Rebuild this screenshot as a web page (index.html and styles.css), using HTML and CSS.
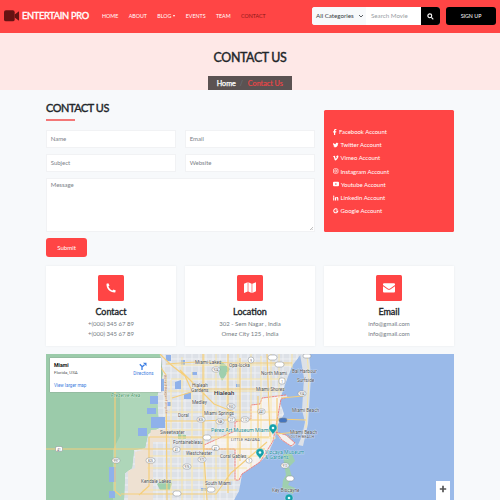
FILE: index.html
```
<!DOCTYPE html>
<html lang="en">
<head>
<meta charset="utf-8">
<title>Contact Us - Entertain Pro</title>
<link rel="stylesheet" href="styles.css">
</head>
<body>
<header class="navbar">
  <a class="brand"><svg class="camera" viewBox="0 0 16 12"><rect width="11" height="11.5" rx="2"/><path d="M11 4.5 15.5 1v10L11 7.5z"/></svg><span>ENTERTAIN PRO</span></a>
  <nav class="menu"><a>HOME</a><a>ABOUT</a><a>BLOG<i class="caret"></i></a><a>EVENTS</a><a>TEAM</a><a class="active">CONTACT</a></nav>
  <div class="search">
    <div class="category">All Categories<svg viewBox="0 0 6 6"><path d="m1 2 2 2 2-2"/></svg></div>
    <div class="query">Search Movie</div>
    <div class="go"><svg viewBox="0 0 8 8"><circle cx="3.2" cy="3.2" r="2.2"/><path d="m5 5 2.2 2.2"/></svg></div>
  </div>
  <a class="signup">SIGN UP</a>
</header>
<section class="hero">
  <h1>CONTACT US</h1>
  <div class="crumbs"><span class="home">Home</span><span class="slash">/</span><span class="here">Contact Us</span></div>
</section>
<main class="container">
  <div class="top">
    <section class="form">
      <h2>CONTACT US</h2>
      <div class="rule"></div>
      <div class="fields">
        <div class="field">Name</div><div class="field">Email</div>
        <div class="field">Subject</div><div class="field">Website</div>
        <div class="field message">Message<svg class="grip" viewBox="0 0 4 4"><path d="M0 4 4 0M2.2 4 4 2.2"/></svg></div>
      </div>
      <a class="submit">Submit</a>
    </section>
    <ul class="social">
      <li><svg style="width:4px" viewBox="0 0 4 6"><path d="M1 6V3.4H.1V2.3H1V1.5C1 .5 1.6 0 2.5 0h.9v1h-.6c-.5 0-.6.2-.6.6v.7h1.1l-.2 1.1h-.9V6z"/></svg>Facebook Account</li>
      <li><svg viewBox="0 0 6 6"><path d="M6 1.2l-.6.6C5.4 4.1 3.8 5.5 1.9 5.5.9 5.5.3 5.2 0 5c.7 0 1.3-.1 1.7-.5C1 4.4.7 4 .6 3.600h.5C.4 3.300.1 2.800.1 2.300l.5.2C0 2 0 1.300.3.8c.7.8 1.500 1.200 2.600 1.300C2.800 1.200 3.400.6 4.200.6c.4 0 .6.1.9.4l.7-.3-.4.6z"/></svg>Twitter Account</li>
      <li><svg viewBox="0 0 6 6"><path d="M0 1.500C.6 1 1.100.5 1.500.5c.9 0 .9 1.600 1.200 2.600.3.900.5.800 1 0 .6-.9.300-1.400-.4-1.100C3.600.9 4.300.3 5.100.3 6.400.3 6 2 5.300 3.100 4.500 4.500 3.400 5.700 2.600 5.700c-.9 0-1.100-1.800-1.500-3.200C.9 1.700.7 2 .3 2.200z"/></svg>Vimeo Account</li>
      <li><svg class="line" viewBox="0 0 6 6"><rect x=".5" y=".5" width="5" height="5" rx="1.300"/><circle cx="3" cy="3" r="1.200"/><path d="M4.400 1.400h.3"/></svg>Instagram Account</li>
      <li><svg style="width:6px" viewBox="0 0 6 6"><path fill-rule="evenodd" d="M1 .8h4q1 0 1 1v2.400q0 1-1 1H1q-1 0-1-1V1.800q0-1 1-1zM2.400 2v2L4 3z"/></svg>Youtube Account</li>
      <li><svg viewBox="0 0 6 6"><path d="M.2 2.100h1.200v3.600H.2zM.8.400a.7.700 0 1 1 0 1.400.7.700 0 0 1 0-1.400zM2.200 2.100h1.100v.5C4 1.600 5.800 1.800 5.800 3.500v2.200H4.600v-2c0-1.100-1.200-1-1.200 0v2H2.200z"/></svg>Linkedin Account</li>
      <li><svg class="line g" viewBox="0 0 6 6"><path d="M4.800 1.500A2.200 2.200 0 1 0 5.200 3.100H3.100"/></svg>Google Account</li>
    </ul>
  </div>
  <div class="cards">
    <article class="card"><div class="tile"><svg viewBox="0 0 10 10"><path d="M2.300.2.500.8C.2 5.800 4.200 9.800 9.200 9.500l.6-1.900-2.300-1.100-1 1.100C4.600 6.800 3.200 5.400 2.400 3.500l1.100-1z"/></svg></div><h3>Contact</h3><p>+(000) 345 67 89<br>+(000) 345 67 89</p></article>
    <article class="card"><div class="tile"><svg style="width:12px" viewBox="0 0 13 12"><path d="M0 2 4 .3v9.900L0 11.900zM4.700.3l3.600 1.600v9.900l-3.600-1.600zM9 1.900 13 .2v9.900l-4 1.700z"/></svg></div><h3>Location</h3><p>302 - Sem Nagar , India<br>Omez City 125 , India</p></article>
    <article class="card"><div class="tile"><svg style="width:12px" viewBox="0 0 12 10"><path d="M1 .3h10q1 0 1 1v.8L7.200 5.500q-1.200.9-2.400 0L0 2.100v-.8q0-1 1-1zM0 3.200l4.400 3.100q1.600 1 3.200 0L12 3.200v5.300q0 1-1 1H1q-1 0-1-1z"/></svg></div><h3>Email</h3><p>info@gmail.com<br>info@gmail.com</p></article>
  </div>
  <section class="map">
    <svg class="chart" viewBox="46 354 408 146">
      <defs><pattern id="grid" width="7" height="7" patternUnits="userSpaceOnUse"><path class="street" d="M0 2H7M3 0V7"/></pattern></defs>
      <rect class="sea" x="46" y="354" width="408" height="146"/>
      <path class="land" d="M46 354H301L292 366 286 382 281 396 280 402 284 414 276 428 275 438 268 454 260 462 242 474 239 491 234 500H46z"/>
      <path fill="url(#grid)" d="M155 354H301L292 366 286 382 281 396 280 402 284 414 276 428 275 438 268 454 260 462 242 474 239 491 234 500H120V455L150 430z"/>
      <path class="park" d="M46 354H160L163 374 157 397 159 428 148 434 145 448 134 450 132 468 125 473 124 500H46z"/>
      <path class="lightpark" d="M114 385 125 376 161 375 157 397 159 428 148 434 145 448 134 450 132 468 125 473 124 500H113V450L119 437z"/>
      <path class="marsh" d="M46 354h74v82l-7 13v51H46z"/>
      <path class="sand" d="M151 430l18-1v13h-16v58h-25v-29l7-3v-16l12-3z"/>
      <path class="land" d="M300 354h9l2 22-3 48-5 22-5-1 4-9 3-14-3-12 2-32zM276 432l11 4 9 8-4 3-12-8z"/>
      <path class="park" d="M283 454l9 0 3 7-6 6 3 10-4 8 7 3-2 6-11-4 1-10 3-5-2-12zM220 360l10 9-8 12-3-7zM178 434l8 1v4h-8zM157 484l7-5 8 4-2 7h-10z"/>
      <path class="lake" d="M166 355h5v6h-5zM175 382l6-2v9h-6zM157 378l7 1v12h-7zM150 396h8v8h-8zM147 408h9v6h-9zM151 417h14v11h-14zM138 428h9v8h-9zM109 467h7v15h-7zM109 491h6v7h-6zM184 394l7-2v7h-7zM181 360h4v5h-4zM192 372h5v3h-5zM236 384h4v3h-4zM166 402h5v4h-5zM201 488h8v3h-8z"/>
      <path class="city" d="M286 395l-24 3-2 6-9 1v14l-16 3v9l-31 14v4h31v31h4l3-6 18-12 13-21 5-26 3-16 7-2M276 432l10 3 9 8-4 3-9-6z"/>
      <path class="minor" d="M171 365h121M171 379h115M168 391h114M165 412h113M172 430h100M174 438h102M150 456h116M147 468h100M147 480h89M142 490h95M171 380v120M182 357v143M192 372v128M204 354v146M216 354v146M227 372v110M238 354v126M251 354v113M261 356v103M271 354v89M279 354v44M292 354v14M307 354l2 24-3 50"/>
      <path class="road" d="M46 449h219M115 384v107l6 5M160 354l10 10 15 12 7 15M154 358l12 17 1 125M166 364l30-2 42 1h54M172 398l29-9h84M165 421h37l23-1h55M149 451v-14h120M121 494h95l15-21 36-31M149 450v36l-10 9M203 354v88l4 58M228 354v139M240 358v103M258 396v52M267 354l3 83M277 398v34M281 398l22-2M278 419l28 1M276 434l22-2M180 370l34 34 20 8"/>
      <g class="labels">
        <text x="111" y="397" class="green">Preserve Area</text>
        <text x="195" y="364">Miami Lakes</text><text x="229" y="367">Opa-locka</text><text x="261" y="374.500">North Miami</text><text x="292" y="373">Bal Harbour</text><text x="297" y="381.500">Surfside</text>
        <text x="192" y="387">Hialeah</text><text x="191" y="391.500">Gardens</text><text x="214" y="394.500" class="big">Hialeah</text><text x="256" y="390.500">Miami Shores</text><text x="192" y="404">Medley</text><text x="204" y="415">Miami Springs</text><text x="292" y="411.500">Miami Beach</text><text x="290" y="433.500">Miami Beach</text><text x="288" y="438" class="area">SOUTH BEACH</text>
        <text x="160" y="434">Sweetwater</text><text x="173" y="444">Fontainebleau</text><text x="186" y="455">Westchester</text><text x="220" y="458">Coral Gables</text><text x="231" y="441" class="area">LITTLE HAVANA</text><text x="141" y="482.500">Kendale Lakes</text><text x="205" y="484.500">South Miami</text><text x="272" y="491.500">Key Biscayne</text><text x="178" y="416.500">Doral</text>
        <text x="211" y="432" class="poi">Pérez Art Museum Miami</text><text x="265" y="454" class="poi">Vizcaya Museum</text><text x="265" y="459" class="poi">&amp; Gardens</text>
        <text class="brown" transform="translate(164 375) rotate(88)">Ronald Reagan Turnpike</text>
      </g>
      <g class="shields">
        <rect x="55.500" y="446.500" width="7" height="5" rx="1.500"/><rect x="112" y="458" width="8" height="5" rx="2.500"/><rect x="146" y="458" width="9" height="5" rx="2.500"/><rect x="173" y="447" width="7" height="5" rx="2"/><rect x="212" y="445.500" width="7" height="5" rx="2"/><rect x="212" y="367" width="8" height="5" rx="2.500"/><rect x="248" y="357" width="6" height="6" rx="3"/><rect x="268" y="355" width="9" height="5" rx="2.500"/><rect x="275" y="362" width="9" height="5" rx="2.500"/><rect x="303" y="354" width="8" height="4" rx="2"/><rect x="279" y="378" width="6" height="6" rx="2"/><rect x="298" y="391" width="8" height="5" rx="2.500"/><rect x="227" y="404" width="8" height="5" rx="2.500"/><rect x="258" y="409" width="7" height="5" rx="2"/><rect x="197" y="417" width="8" height="5" rx="2.500"/><rect x="216" y="419" width="8" height="5" rx="2.500"/><rect x="228" y="417" width="7" height="5" rx="2"/><rect x="241" y="417" width="8" height="5" rx="2.500"/><rect x="203" y="435" width="8" height="5" rx="2.500"/><rect x="198" y="457" width="8" height="5" rx="2.500"/><rect x="183" y="464" width="8" height="5" rx="2.500"/><rect x="246" y="458" width="6" height="5" rx="2.500"/><rect x="207" y="487" width="8" height="5" rx="2.500"/><rect x="281" y="463" width="8" height="5" rx="2.500"/><rect x="286" y="476" width="8" height="5" rx="2.500"/><rect x="173" y="491" width="8" height="5" rx="2.500"/>
        <rect class="blue" x="279" y="418" width="8" height="4.500" rx="2"/>
      </g>
      <g class="shieldtext"><text x="59" y="450.500">41</text><text x="116" y="462">997</text><text x="150.500" y="462">825</text><text x="176.500" y="451">41</text><text x="216" y="371">924</text><text x="251" y="361.500">9</text><text x="282" y="382.500">1</text><text x="302" y="395">934</text><text x="231" y="408">953</text><text x="261.500" y="413">441</text><text x="201" y="421">826</text><text x="220" y="423">948</text><text x="231.500" y="421">27</text><text x="245" y="421">112</text><text x="215.500" y="449.500">41</text><text x="187" y="468">976</text><text x="202" y="461">973</text><text x="249" y="462">1</text><text x="285" y="467">913</text></g>
      <g class="pins"><path id="pin" d="M273 435c-1-3.500-4-4-4-7a4 4 0 0 1 8 0c0 3-3 3.500-4 7z"/><use href="#pin" x="-13" y="24.500"/><use href="#pin" x="16" y="70"/></g>
      <g class="dots"><circle cx="273" cy="428" r="1.300"/><circle cx="260" cy="452.500" r="1.300"/><circle cx="289" cy="498" r="1.300"/></g>
    </svg>
    <div class="place">
      <div><b>Miami</b><small>Florida, USA</small><a>View larger map</a></div>
      <div class="directions"><svg viewBox="0 0 8 8"><path class="stem" d="M3 8V4.500L.8 2.300M3 5l2.500-2.300"/><path class="head" d="M4 .8h3.500v3.400z"/></svg>Directions</div>
    </div>
    <div class="zoom"><svg viewBox="0 0 8 8"><path d="M4 .8v6.400M.8 4h6.400"/></svg></div>
  </section>
</main>
</body>
</html>
```
FILE: styles.css
```
* { box-sizing: border-box; }
body { margin: 0; width: 500px; height: 500px; overflow: hidden; background: #f7f9fb; color: #212529; font-family: Lato, sans-serif; font-size: 6px; }
h1, h2, h3, p, ul { margin: 0; padding: 0; }
svg { display: block; flex: none; }

.navbar { height: 32.500px; background: #ff4545; display: flex; align-items: center; color: #fff; padding: 0 4px; }
.brand { display: flex; align-items: center; width: 98px; font-size: 9.300px; font-weight: 400; -webkit-text-stroke: .35px #fff; letter-spacing: -.32px; white-space: nowrap; }
.brand span { position: relative; top: -.5px; }
.camera { width: 15.500px; height: 12px; margin-right: 2.500px; fill: #651313; }
.menu { display: flex; gap: 10.400px; font-size: 5.300px; width: 210px; white-space: nowrap; }
.menu .active { color: #8d1717; }
.caret { display: inline-block; border: 1.500px solid transparent; border-width: 2px 1.500px 0; border-top-color: #fff; margin-left: 2px; vertical-align: 1px; }
.search { display: flex; width: 128px; height: 18px; border-radius: 3px; overflow: hidden; background: #fff; font-size: 6.200px; line-height: 18px; }
.category { width: 54px; padding-left: 4px; background: #f7f9fb; color: #343a40; display: flex; align-items: center; gap: 4px; white-space: nowrap; }
.category svg { width: 6px; fill: none; stroke: #343a40; stroke-width: .8; }
.query { flex: 1; padding-left: 5px; color: #989da2; }
.go { width: 19px; background: #000; display: grid; place-items: center; }
.go svg { width: 7px; fill: none; stroke: #fff; stroke-width: 1.300; }
.signup { width: 50px; height: 18px; margin-left: 6px; border-radius: 3px; background: #000; font-size: 5.300px; line-height: 18px; text-align: center; }

.hero { height: 57.500px; background: #fee8e7; display: flex; flex-direction: column; align-items: center; justify-content: space-between; padding-top: 17px; }
h1 { font-size: 12.400px; line-height: 16px; font-weight: 400; -webkit-text-stroke: .4px #212529; letter-spacing: -.35px; }
.crumbs { width: 84px; height: 14px; padding-left: 8.700px; background: #5b5252; color: #fff; font-size: 7.200px; line-height: 15px; display: flex; white-space: nowrap; }
.home { -webkit-text-stroke: .25px #fff; }
.slash { width: 12px; padding-left: 4px; color: #6c757d; }
.here { color: #ef4547; -webkit-text-stroke: .15px #ef4547; }

.container { width: 408px; margin: 0 46px; }
.top { display: flex; gap: 9px; height: 176px; }
.form { width: 269px; padding-top: 9.500px; }
h2 { font-size: 10.900px; line-height: 15px; font-weight: 400; -webkit-text-stroke: .4px #212529; letter-spacing: -.42px; }
.rule { width: 29px; height: 2px; background: #f37777; margin: 4.500px 0 9px; }
.fields { display: grid; grid-template-columns: 130px 130px; grid-template-rows: 18px 18px 54px; gap: 6px 9px; }
.field { position: relative; background: #fff; border: .5px solid #f1f2f4; padding-left: 3.700px; line-height: 16.500px; color: #7b8188; font-size: 6px; }
.message { grid-column: span 2; line-height: 12px; }
.grip { position: absolute; right: 1px; bottom: 1px; width: 3px; stroke: #777; stroke-width: .6; }
.submit { display: block; width: 41px; height: 19px; margin-top: 6px; border-radius: 3px; background: #ff4545; color: #fff; text-align: center; line-height: 19.500px; font-size: 6.100px; }
.social { width: 130px; height: 121.500px; margin-top: 20px; padding: 15px 9px; border-radius: 1.500px; background: #ff4545; color: #fff; list-style: none; }
.social li { display: flex; align-items: center; gap: 2px; height: 13.200px; font-size: 5.950px; white-space: nowrap; }
.social svg { width: 5.500px; height: 6px; fill: #fff; }
.social .line { fill: none; stroke: #fff; stroke-width: .7; }
.social .g { stroke-width: 1.100; }

.cards { display: grid; grid-template-columns: repeat(3, 130px); gap: 9px; }
.card { height: 79.500px; padding-top: 9px; background: #fff; box-shadow: 0 0 2px #e8eaed; text-align: center; }
.tile { width: 26px; height: 26px; margin: 0 auto 4px; border-radius: 1.500px; background: #ff4545; display: grid; place-items: center; }
.tile svg { width: 10px; fill: #fff; }
h3 { font-size: 9px; line-height: 14px; font-weight: 400; -webkit-text-stroke: .35px #212529; }
.card p { color: #747b82; font-size: 6px; line-height: 10px; }

.map { position: relative; margin-top: 8.500px; height: 146px; overflow: hidden; font-family: Roboto, sans-serif; }
.chart { width: 408px; height: 146px; }
.sea { fill: #9abae9; }
.land { fill: #dde1e7; }
.park { fill: #9fcfae; }
.lightpark { fill: #aed6b9; }
.marsh { fill: #9bcbaa; }
.sand { fill: #eee1d2; }
.lake { fill: #8fb1ea; }
.city { fill: #fdf8f2; fill-opacity: .7; stroke: #ee7774; stroke-width: .9; stroke-dasharray: 2.500 .4; }
.street { fill: none; stroke: #f2f4f6; stroke-width: .8; }
.minor { fill: none; stroke: #fae5a2; stroke-width: .9; }
.road { fill: none; stroke: #f5cf7c; stroke-width: 1.200; }
.labels { font-size: 4.700px; fill: #4d5055; stroke: #fff; stroke-width: .7; stroke-opacity: .65; paint-order: stroke; }
.labels .big { font-size: 6px; font-weight: 500; fill: #292d32; }
.labels .area { font-size: 3.700px; letter-spacing: .15px; }
.labels .poi { font-size: 5.200px; fill: #168c9d; }
.labels .green { font-style: italic; fill: #3e9562; font-size: 4.900px; }
.labels .brown { font-size: 3.600px; fill: #a56b51; }
.shields rect { fill: #fff; stroke: #858a90; stroke-width: .5; }
.shields .blue { fill: #4474bd; }
.shieldtext { fill: #555; font-size: 3px; text-anchor: middle; }
.pins { fill: #14a0aa; stroke: #fff; stroke-width: .3; }
.dots { fill: #e9ffff; }
.place { position: absolute; left: 3.500px; top: 4px; width: 111px; height: 34px; padding: 4px 7px 0 4.500px; background: #fff; box-shadow: 0 0 1px #777; display: flex; justify-content: space-between; color: #3b7be0; font-size: 4.500px; line-height: 6px; }
.place b, .place small, .place a { display: block; }
.place b { color: #111; font-size: 5.200px; line-height: 6px; }
.place small { color: #555; font-size: 4.400px; margin: 2px 0 6.500px; }
.directions { text-align: center; }
.directions svg { width: 8px; height: 8px; margin: 0 auto 1px; }
.stem { fill: none; stroke: #3e7fe3; stroke-width: 1.300; }
.head { fill: #3e7fe3; }
.zoom { position: absolute; right: 4px; bottom: 0; width: 14px; height: 19.500px; padding-top: 4px; background: #fff; }
.zoom svg { width: 8px; height: 8px; margin: 0 auto; stroke: #555; stroke-width: 1.700; }
```
